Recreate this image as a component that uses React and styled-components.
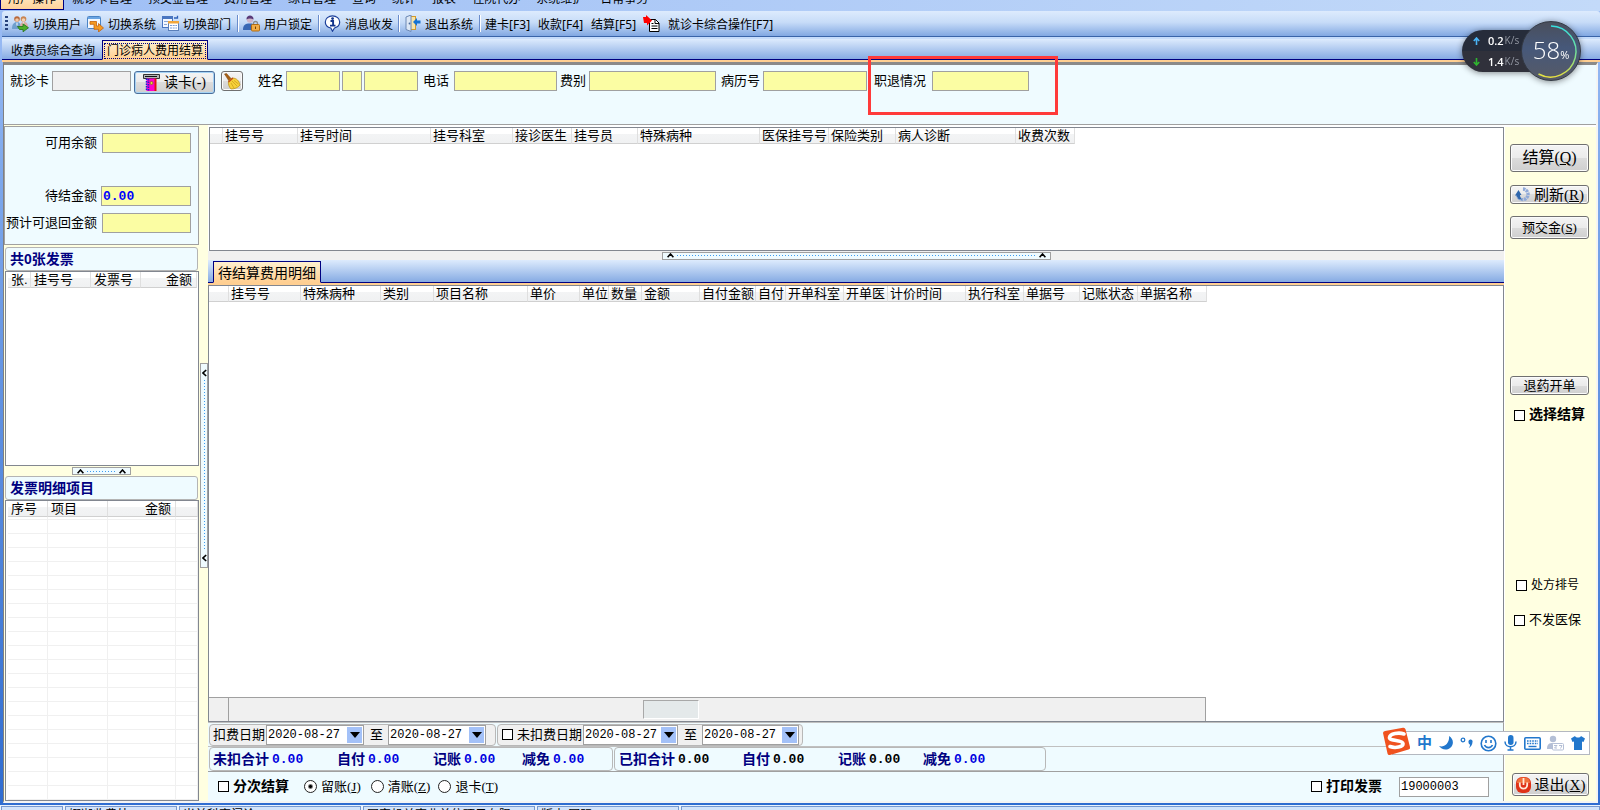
import React from "react";
import styled, { createGlobalStyle, css } from "styled-components";

const Global = createGlobalStyle`
  *, *::before, *::after { box-sizing: border-box; }
  html, body { margin: 0; height: 100%; overflow: hidden; }
  body, button, input, select { font-family: "Liberation Sans", "Noto Sans CJK SC", sans-serif; font-size: 13px; color: #000; }
  body { line-height: 16px; white-space: nowrap; }
`;

const Shell = styled.div`
  position: relative;
  display: flex;
  flex-direction: column;
  height: 100vh;
  overflow: hidden;
  background: linear-gradient(#9ebef5 0, #7fa9ec 20%, #2f6cd0 100%);
`;

/* ---------- menu and toolbar ---------- */
const MenuBar = styled.nav`
  flex: 0 0 11px;
  display: flex;
  align-items: flex-end;
  padding-bottom: 1px;
  overflow: hidden;
  background: linear-gradient(90deg, #9ebef5, #c3daf9);
`;
const MenuItem = styled.button`
  height: 20px;
  padding: 0 7px 2px;
  border: 1px solid ${(p) => (p.$active ? "#000080" : "transparent")};
  background: ${(p) => (p.$active ? "linear-gradient(#fff0d0, #ffd29a)" : "transparent")};
  font-size: 12px;
  line-height: 16px;
`;
const ToolBar = styled.div`
  flex: 0 0 26px;
  display: flex;
  align-items: center;
  margin-left: 2px;
  padding-left: 3px;
  border-bottom: 1px solid #3a64a8;
  border-radius: 3px 3px 0 0;
  background: linear-gradient(#ddebfd, #c7dcf8 45%, #82a8e2);
`;
const Grip = styled.span`
  width: 3px;
  height: 16px;
  margin-right: 4px;
  background: repeating-linear-gradient(#27417a 0 2px, transparent 2px 4px);
`;
const ToolButton = styled.button`
  display: flex;
  align-items: center;
  gap: ${(p) => p.$gap || 4}px;
  height: 22px;
  margin-right: ${(p) => p.$after || 6}px;
  padding: 0;
  border: 0;
  background: none;
  font-family: "Noto Sans", "Noto Sans CJK SC", sans-serif;
  font-size: 12px;
  svg { flex: none; }
`;
const Divider = styled.span`
  width: 2px;
  height: 17px;
  margin-right: 4px;
  border-left: 1px solid #6a8ccb;
  border-right: 1px solid #fff;
`;

/* ---------- tabs ---------- */
const TabStrip = styled.div`
  flex: 0 0 25px;
  display: flex;
  align-items: flex-end;
  margin-left: ${(p) => (p.$inner ? 0 : 2)}px;
  padding-left: ${(p) => (p.$inner ? 5 : 0)}px;
  border-top: ${(p) => (p.$inner ? "0" : "2px solid #c6dcfb")};
  border-bottom: 2px solid #ffcf92;
  background: linear-gradient(#ddebfd, #82a8e2);
  box-shadow: inset 0 -1px 0 #000080;
`;
const Tab = styled.button`
  display: flex;
  align-items: center;
  height: ${(p) => (p.$large ? 22 : 20)}px;
  padding: ${(p) => (p.$large ? "1px 4px 0" : p.$active ? "2px 1px 0" : "2px 6px 0 8px")};
  border: 1px solid transparent;
  background: none;
  font-size: ${(p) => (p.$large ? 14 : 12)}px;
  line-height: 16px;
  ${(p) => p.$active && css`
    border-color: #000080;
    border-bottom-color: #ffcf92;
    background: linear-gradient(#fff0cf, #ffcf92);
  `}
`;
const Focus = styled.span`
  padding: 0 3px;
  outline: 1px dotted #000080;
  outline-offset: -1px;
`;

/* ---------- generic form parts ---------- */
const Frame = styled.div`
  flex: 1;
  min-height: 0;
  display: flex;
  flex-direction: column;
  margin: 0 2px 0 3px;
  border-style: solid;
  border-width: 3px 2px 2px 1px;
  border-color: #8a8a8a #f4f4f4 #f4f4f4 #808080;
  background: #fff;
`;
const Field = styled.label`
  position: relative;
  display: flex;
  align-items: center;
  gap: ${(p) => p.$gap || 3}px;
  margin-left: ${(p) => p.$before || 0}px;
`;
const Box = styled.input`
  flex: none;
  width: ${(p) => p.$w}px;
  height: 20px;
  padding: 0 1px;
  border: 1px solid #a0a0a0;
  border-radius: 0;
  outline: 0;
  background: ${(p) => p.$bg || "#fbfda3"};
  ${(p) => p.$money && css`
    color: #0000ff;
    font: bold 13px "Liberation Mono", monospace;
  `}
  ${(p) => p.$code && css`
    font: 12px "Liberation Mono", monospace;
  `}
`;
const Button = styled.button`
  display: flex;
  align-items: center;
  justify-content: center;
  gap: 4px;
  width: ${(p) => p.$w || 79}px;
  height: ${(p) => p.$h}px;
  margin-top: ${(p) => p.$top || 0}px;
  margin-left: ${(p) => p.$before || 0}px;
  padding: 0;
  border: 1px solid ${(p) => (p.$default ? "#4a6f9c" : "#707070")};
  border-radius: 3px;
  box-shadow: inset 0 0 0 1px ${(p) => (p.$default ? "#a5d3f5" : "#fbfbfb")};
  background: linear-gradient(#f4f4f4, #ebebeb 50%, #dcdcdc 50%, #cfcfcf);
  font-family: "Liberation Serif", "Noto Sans CJK SC", serif;
  font-size: ${(p) => p.$size || 13}px;
  line-height: 16px;
  svg { flex: none; }
`;
const Check = styled.label`
  display: flex;
  align-items: center;
  gap: ${(p) => p.$gap || 4}px;
  margin-top: ${(p) => p.$top || 0}px;
  margin-left: ${(p) => p.$before || 0}px;
  font-family: "Liberation Serif", "Noto Sans CJK SC", serif;
  font-size: ${(p) => p.$size || 13}px;
  font-weight: ${(p) => (p.$bold ? 700 : 400)};
`;
const Tick = styled.input.attrs({ type: "checkbox" })`
  appearance: none;
  flex: none;
  width: 11px;
  height: 11px;
  margin: 0;
  border: 1px solid #000;
  background: #fff;
`;
const Radio = styled.input.attrs({ type: "radio" })`
  appearance: none;
  flex: none;
  width: 13px;
  height: 13px;
  margin: 0;
  border: 1px solid #222;
  border-radius: 50%;
  background: #fff;
  &:checked { background: radial-gradient(circle, #000 0 1px, #fff 3px); }
`;

/* ---------- page areas ---------- */
const Patient = styled.form`
  flex: 0 0 60px;
  display: flex;
  align-items: flex-start;
  padding: 6px 0 0 6px;
  border-bottom: 1px solid #a0a0a0;
  background: #effbff;
`;
const Pair = styled.span`
  display: flex;
  gap: 2px;
`;
const Highlight = styled.span`
  position: absolute;
  inset: -15px -29px -24px -6px;
  border: 3px solid #ff3a3a;
  pointer-events: none;
`;
const Body = styled.div`
  flex: 1;
  min-height: 0;
  display: grid;
  grid-template-columns: 195px 9px minmax(0, 1fr) 92px;
`;
const Side = styled.aside`
  display: flex;
  flex-direction: column;
  min-height: 0;
  background: #ffffe1;
`;
const Balance = styled.div`
  flex: 0 0 119px;
  display: flex;
  flex-direction: column;
  align-items: flex-end;
  margin: 1px 0 2px;
  padding: 6px 7px 0 0;
  border: 1px solid #a0a0a0;
  background: #effbff;
`;
const Gap = styled.span`
  flex: none;
  height: ${(p) => p.$h}px;
`;
const GroupTitle = styled.h2`
  flex: 0 0 23px;
  margin: 0 1px 0 1px;
  padding-left: 4px;
  border: 1px solid #b4b4b4;
  border-radius: 3px;
  background: #effbff;
  color: #000080;
  font-size: 14px;
  line-height: 22px;
`;
const GridBox = styled.div`
  flex: ${(p) => (p.$h ? `0 0 ${p.$h}px` : "1 1 0")};
  min-height: 0;
  display: flex;
  flex-direction: column;
  overflow: hidden;
  margin-left: ${(p) => (p.$indent ? 1 : 0)}px;
  padding-left: ${(p) => (p.$pad ? 2 : 0)}px;
  border: 1px solid #828790;
  background: #fff;
`;
const Table = styled.table`
  flex: none;
  table-layout: fixed;
  width: ${(p) => p.$w}px;
  border-collapse: separate;
  border-spacing: 0;
  th {
    height: 16px;
    padding: 0 0 0 ${(p) => p.$inset}px;
    overflow: hidden;
    border-right: 1px solid #dfdfdf;
    border-bottom: 1px solid #d0d0d0;
    background: linear-gradient(#fff, #fff 40%, #f3f4f5 40%, #f0f1f2);
    font-weight: 400;
    line-height: 15px;
    text-align: left;
  }
  th.num { text-align: right; padding-right: 4px; }
  td {
    height: 14px;
    padding: 0;
    border-right: 1px solid #f0f0f0;
    border-bottom: 1px solid #f0f0f0;
  }
  tr:first-child td { height: 3px; }
`;
const SplitBar = styled.div`
  flex: 0 0 ${(p) => p.$h || 9}px;
  display: flex;
  align-items: center;
  justify-content: center;
  background: ${(p) => p.$bg};
`;
const Handle = styled.button`
  display: flex;
  flex-direction: ${(p) => (p.$vertical ? "column" : "row")};
  align-items: center;
  gap: 3px;
  width: ${(p) => p.$w}px;
  height: ${(p) => p.$h}px;
  padding: ${(p) => (p.$vertical ? "5px 0" : "0 4px")};
  border: 1px solid #a0a0a0;
  background: #effbff;
  svg { flex: none; }
`;
const Dots = styled.span`
  flex: 1;
  align-self: center;
  ${(p) => p.$vertical
    ? css`width: 1px; background: repeating-linear-gradient(#3c9cf0 0 1px, transparent 1px 3px);`
    : css`height: 1px; background: repeating-linear-gradient(90deg, #3c9cf0 0 1px, transparent 1px 3px);`}
`;
const VSplit = styled.div`
  display: flex;
  align-items: center;
  justify-content: flex-end;
  padding-top: 4px;
  background: #ffffe1;
`;
const Main = styled.main`
  display: flex;
  flex-direction: column;
  min-width: 0;
  min-height: 0;
  padding-top: 2px;
  background: #fff;
`;
const GridFoot = styled.div`
  flex: 0 0 24px;
  display: flex;
  width: 997px;
  margin-top: auto;
  border: solid #a0a0a0;
  border-width: 1px 1px 0 0;
  background: #f0f0f0;
`;
const FootMark = styled.span`
  width: 20px;
  border-right: 1px solid #a0a0a0;
`;
const FootCell = styled.span`
  width: 56px;
  height: 19px;
  margin: 2px 0 0 414px;
  border: 1px solid #a8a8a8;
  border-right-color: #fff;
  border-bottom-color: #fff;
  background: #e4e9ea;
`;
const Strip = styled.div`
  flex: 0 0 ${(p) => p.$h}px;
  display: flex;
  align-items: center;
  border-top: 1px solid ${(p) => p.$line || "#c0c0c0"};
  border-right: 1px solid #a0a0a0;
  background: #effbff;
`;
const Group = styled.div`
  display: flex;
  align-items: center;
  width: ${(p) => p.$w}px;
  height: ${(p) => p.$h}px;
  margin-left: 1px;
  padding-left: ${(p) => p.$pad || 4}px;
  border: 1px solid #b8b8b8;
  border-radius: 4px;
  background: ${(p) => p.$bg || "#effbff"};
`;
const DateBox = styled.span`
  display: flex;
  align-items: center;
  width: ${(p) => p.$w || 97}px;
  height: 20px;
  padding-right: 1px;
  border: 1px solid #a0a0a0;
  background: #fff;
`;
const DateSelect = styled.select`
  appearance: none;
  flex: 1;
  min-width: 0;
  height: 18px;
  padding: 1px 0 0 1px;
  border: 0;
  background: none;
  font-family: "Liberation Mono", monospace;
  font-size: 12px;
`;
const Arrow = styled.span`
  display: flex;
  align-items: center;
  justify-content: center;
  width: 15px;
  height: 16px;
  background: #a3c1f8;
`;
const To = styled.span`
  margin: 0 5px 0 6px;
`;
const Sum = styled.span`
  flex: none;
  display: flex;
  align-items: center;
  gap: 3px;
  width: ${(p) => p.$w}px;
  color: #000080;
  font-size: 14px;
  font-weight: 700;
`;
const Amount = styled.output`
  color: ${(p) => (p.$dark ? "#000" : "#0000e0")};
  font: bold 13px "Liberation Mono", monospace;
`;
const PrintArea = styled.div`
  display: flex;
  align-items: center;
  gap: 17px;
  margin-left: auto;
  padding-right: 14px;
`;
const Actions = styled.aside`
  display: flex;
  flex-direction: column;
  align-items: flex-start;
  margin-top: 2px;
  padding: 0 0 5px 5px;
  border-left: 1px solid #fff;
  background: #ffffe1;
`;
const StatusBar = styled.footer`
  flex: 0 0 5px;
  display: flex;
  gap: 2px;
  padding: 1px 0 0 1px;
  overflow: hidden;
  background: #eaf2fd;
`;
const StatusCell = styled.span`
  flex: ${(p) => (p.$w ? `0 0 ${p.$w}px` : "1")};
  height: 20px;
  padding-left: 3px;
  overflow: hidden;
  border: 1px solid #7799d0;
  background: #d3e3fa;
  font-size: 12px;
  line-height: 16px;
`;

/* ---------- floating widgets ---------- */
const ImeBar = styled.div`
  position: absolute;
  right: 10px;
  bottom: 55px;
  display: flex;
  align-items: center;
  justify-content: space-between;
  width: 198px;
  height: 24px;
  padding: 0 4px 0 24px;
  border: 1px solid #b4b8c0;
  background: #fff;
  color: #2277cc;
  font-size: 15px;
  font-weight: 700;
  svg { flex: none; }
`;
const ImeLogo = styled.svg`
  position: absolute;
  left: -11px;
  top: -5px;
`;
const Meter = styled.div`
  position: absolute;
  right: 19px;
  top: 21px;
  display: flex;
  align-items: center;
  filter: drop-shadow(0 1px 3px rgba(0, 0, 0, 0.45));
`;
const Rates = styled.div`
  display: flex;
  flex-direction: column;
  justify-content: space-between;
  width: 79px;
  height: 42px;
  margin-right: -20px;
  padding: 2px 0 2px 11px;
  border-radius: 21px 0 0 21px;
  background: linear-gradient(#262c3a 0 50%, #30313b 50%);
`;
const Rate = styled.span`
  display: flex;
  align-items: center;
  color: #fff;
  font: 600 11px/17px "Open Sans", sans-serif;
  svg { margin-right: 8px; }
  small { color: #9297a2; font-size: 10px; font-weight: 400; margin-left: 1px; }
`;
const Dial = styled.div`
  position: relative;
  display: flex;
  align-items: baseline;
  justify-content: center;
  width: 60px;
  height: 60px;
  border-radius: 50%;
  background: linear-gradient(#4a4f5c, #46587a 45%, #565a66);
  border: 1px solid #333944;
  color: #fff;
  font: 300 24px/56px "Open Sans", sans-serif;
  small { font-size: 11px; font-weight: 400; }
  svg { position: absolute; inset: -1px; }
`;

/* ---------- drawings ---------- */
const Chevron = ({ left }) => (
  <svg width={left ? 5 : 7} height={left ? 8 : 5} viewBox={left ? "0 0 5 8" : "0 0 7 5"}>
    <path d={left ? "M4.2 1L1 4l3.2 3" : "M.6 4.2L3.5 1l2.9 3.2"} fill="none" stroke="#000" strokeWidth="1.6" />
  </svg>
);
const Down = () => (
  <svg width="10" height="6" viewBox="0 0 10 6"><path d="M0 0h10L5 6z" fill="#000" /></svg>
);
const UsersIcon = () => (
  <svg width="17" height="17" viewBox="0 0 17 17">
    <circle cx="5" cy="4" r="2.8" fill="#b9683a" /><circle cx="5" cy="5" r="1.8" fill="#f0c8a8" />
    <circle cx="11.500" cy="4" r="2.800" fill="#c98552" /><circle cx="11.500" cy="5" r="1.800" fill="#f3d2b4" />
    <path d="M0 14c0-5 2-7 5-7s4 2 4 7z" fill="#6f9fce" /><path d="M8 12c0-4 2-5 4-5s4 1 4 5z" fill="#dcaea6" />
    <path d="M5 7.500v3M11.500 7.500v2" stroke="#fff" />
    <path d="M5.500 11.500h5.500V8.800l5.500 4-5.500 4V14.500H7.500z" fill="#4eb02c" stroke="#24701a" strokeWidth=".8" />
  </svg>
);
const SystemIcon = () => (
  <svg width="17" height="17" viewBox="0 0 17 17">
    <rect x=".5" y="1.500" width="13" height="12" rx="1" fill="#f2f8ff" stroke="#4a84c6" />
    <path d="M1 2h12v2H1z" fill="#6aa4e2" />
    <path d="M3 6.500h6.500v4.500h2V8.500l5 4.500-5 4v-2.700H7V9.300H3z" fill="#f59a22" stroke="#c4620a" strokeWidth=".8" />
  </svg>
);
const DeptIcon = () => (
  <svg width="17" height="17" viewBox="0 0 17 17">
    <rect x=".5" y="1.500" width="10" height="11" fill="#f4f8ff" stroke="#4a76c0" /><path d="M1 2h9v2H1z" fill="#4a76c0" />
    <path d="M2 6.500h4M2 9.500h3" stroke="#8aa6d4" />
    <rect x="6.500" y="6.500" width="10" height="9" fill="#fff" stroke="#5a7fba" /><path d="M6 6h11v2.500H6z" fill="#f2a63a" />
    <path d="M8 10.500h7M8 13h7" stroke="#7c9ed6" strokeDasharray="2 .7" />
    <path d="M12 3h3.500V.8" fill="none" stroke="#2f62b8" strokeWidth="1.300" />
  </svg>
);
const LockIcon = () => (
  <svg width="17" height="17" viewBox="0 0 17 17">
    <circle cx="7" cy="4.500" r="3.200" fill="#cdb4c8" /><path d="M3.500 4.500c-.5-5.500 7.500-5.500 7 0-2-1.500-5-1.500-7 0z" fill="#5a3a78" />
    <path d="M0 15c0-5 2-6.500 7-6.500S13 11 13 15z" fill="#3867b4" />
    <path d="M10.500 10V8.500a2 2 0 014 0V10" fill="none" stroke="#8a8a8a" strokeWidth="1.300" />
    <rect x="8.500" y="9.500" width="8" height="6.500" rx="1" fill="#f1ac46" stroke="#b06c12" /><path d="M12.500 11.500v2.500" stroke="#704000" />
  </svg>
);
const InfoIcon = () => (
  <svg width="17" height="17" viewBox="0 0 17 17">
    <path d="M8.500.8c4 0 7.200 2.800 7.200 6.200 0 3-2.200 5.200-5.200 6L8.500 16.200 6.800 13C3.500 12.300 1.300 10 1.300 7 1.300 3.600 4.500.8 8.500.8z" fill="#fff" stroke="#1b3f9a" strokeWidth="1.200" />
    <circle cx="8.600" cy="3.600" r="1.400" fill="#12348c" /><path d="M6.500 6h2.600v4.200M6 10.600h5.500" fill="none" stroke="#12348c" strokeWidth="1.900" />
  </svg>
);
const DoorIcon = () => (
  <svg width="17" height="17" viewBox="0 0 17 17">
    <rect x="4.500" y="1.500" width="7" height="13" fill="#f7e3a8" stroke="#d29a2c" />
    <path d="M2 2l5-2v16.500l-5-2z" fill="#dce7f5" stroke="#6c88b4" /><circle cx="5.500" cy="8.500" r=".9" fill="#4b6a9c" />
    <path d="M9 7l4-4v2.500h3.500v3H13V11z" fill="#1673d2" />
  </svg>
);
const CardIcon = () => (
  <svg width="17" height="17" viewBox="0 0 17 17">
    <path d="M6.500 4.500h6l3.500 3.500v8.500H6.500z" fill="#fff" stroke="#000" /><path d="M12 4.500V8.500h4M8.500 8.500h2M8.500 11h6M8.500 13.500h6" fill="none" stroke="#000" />
    <path d="M0 2h3V0l6 5.500L4 10.500V8H1z" fill="#f00" />
  </svg>
);
const ReaderIcon = () => (
  <svg width="17" height="17" viewBox="0 0 17 17">
    <path d="M.5.5h16v4h-16z" fill="#b5b5b5" stroke="#333" /><path d="M2 2.500h12" stroke="#111" />
    <path d="M3.500 4.500h9V17h-9z" fill="#f0c" /><path d="M3.500 4.500v12.500M5.500 5v12" stroke="#1b22d6" strokeWidth="1.500" strokeDasharray="1.500 1" />
    <path d="M12.500 4.500V17" stroke="#e01010" strokeWidth="2" /><circle cx="8.500" cy="9" r="1.500" fill="#e8d040" stroke="#7a6a10" strokeWidth=".7" />
  </svg>
);
const BroomIcon = () => (
  <svg width="18" height="17" viewBox="0 0 18 17">
    <path d="M1.500 1l2-.5 5 5.500-2.500 2z" fill="#a85f14" stroke="#744008" strokeWidth=".5" />
    <path d="M5.500 8l3.500-3c5 0 7 3 8 7-2 2.500-5 4-9 4-2-2-3-5-2.500-8z" fill="#f7d13a" stroke="#b98c10" strokeWidth=".7" />
    <path d="M9 8l5 5M8 10l3 5M11 7.500l4.500 3.500" stroke="#c79a18" strokeWidth=".7" /><path d="M5.500 9l4.500-4" stroke="#c4481a" strokeWidth="1.300" />
  </svg>
);
const RefreshIcon = () => (
  <svg width="15" height="15" viewBox="0 0 15 15">
    <path d="M8 2a5.300 5.300 0 11-5.500 6" fill="none" stroke="#8fa9d8" strokeWidth="3.400" strokeDasharray="2.400 .7" />
    <path d="M0 8.500L3.500 3l3 5H5c0 2 .7 3 2 4.500C4 13 2 11 1.800 8.500z" fill="#2e66ac" />
  </svg>
);
const PowerIcon = () => (
  <svg width="15" height="16" viewBox="0 0 15 16">
    <rect width="15" height="16" rx="6" fill="#df3218" /><path d="M1 6c0-4 3-5.500 6.500-5.500S14 2 14 6z" fill="#f0713c" />
    <path d="M3.800 5.500v2.500a3.700 3.700 0 007.400 0V5.500M7.500 1v7" fill="none" stroke="#ffe9d8" strokeWidth="1.800" />
  </svg>
);

/* ---------- data ---------- */
const menus = ["用户操作", "就诊卡管理", "预交金管理", "费用管理", "综合管理", "查询", "统计", "报表", "住院代办", "系统维护", "日常事务"];
const registerCols = [["", 13], ["挂号号", 75], ["挂号时间", 133], ["挂号科室", 82], ["接诊医生", 59], ["挂号员", 66], ["特殊病种", 122], ["医保挂号号", 69], ["保险类别", 67], ["病人诊断", 120], ["收费次数", 59]];
const feeCols = [["", 20], ["挂号号", 72], ["特殊病种", 80], ["类别", 53], ["项目名称", 94], ["单价", 52], ["单位", 29], ["数量", 33], ["金额", 58], ["自付金额", 56], ["自付", 30], ["开单科室", 58], ["开单医", 44], ["计价时间", 78], ["执行科室", 58], ["单据号", 56], ["记账状态", 58], ["单据名称", 69]];
const invoiceCols = [["张.", 23], ["挂号号", 60], ["发票号", 50], ["金额", 56, "num"]];
const itemCols = [["序号", 40], ["项目", 60], ["金额", 68, "num"], ["", 22]];
const statuses = [["", 62], ["娜迦收费处", 112], ["当前科室门诊", 182], ["国家机关事业单位项目有限", 172], ["版本 国际", 142], ["", 0]];

const DataGrid = ({ cols, rows = 0, inset = 2 }) => (
  <Table $w={cols.reduce((n, c) => n + c[1], 0)} $inset={inset}>
    <colgroup>{cols.map((c, i) => <col key={i} width={c[1]} />)}</colgroup>
    <thead><tr>{cols.map((c, i) => <th key={i} className={c[2]}>{c[0]}</th>)}</tr></thead>
    {rows > 0 && (
      <tbody>{Array.from({ length: rows }, (_, r) => <tr key={r}>{cols.map((c, i) => <td key={i} />)}</tr>)}</tbody>
    )}
  </Table>
);
const DatePick = ({ w, label }) => (
  <DateBox $w={w}>
    <DateSelect aria-label={label}><option>2020-08-27</option></DateSelect>
    <Arrow><Down /></Arrow>
  </DateBox>
);
const Total = ({ w, name, dark }) => (
  <Sum $w={w}>{name}<Amount $dark={dark}>0.00</Amount></Sum>
);

export default function App() {
  return (
    <>
      <Global />
      <Shell>
        <MenuBar>{menus.map((m, i) => <MenuItem key={m} $active={i === 0}>{m}</MenuItem>)}</MenuBar>
        <ToolBar>
          <Grip />
          <ToolButton><UsersIcon />切换用户</ToolButton>
          <ToolButton><SystemIcon />切换系统</ToolButton>
          <ToolButton><DeptIcon />切换部门</ToolButton>
          <Divider />
          <ToolButton><LockIcon />用户锁定</ToolButton>
          <Divider />
          <ToolButton $after={5}><InfoIcon />消息收发</ToolButton>
          <Divider />
          <ToolButton><DoorIcon />退出系统</ToolButton>
          <Divider />
          <ToolButton $after={8}>建卡[F3]</ToolButton>
          <ToolButton $after={8}>收款[F4]</ToolButton>
          <ToolButton $after={7}>结算[F5]</ToolButton>
          <ToolButton $gap={8}><CardIcon />就诊卡综合操作[F7]</ToolButton>
        </ToolBar>
        <TabStrip>
          <Tab>收费员综合查询</Tab>
          <Tab $active><Focus>门诊病人费用结算</Focus></Tab>
        </TabStrip>

        <Frame>
          <Patient onSubmit={(e) => e.preventDefault()}>
            <Field>就诊卡<Box $w={79} $bg="#f0f0f0" /></Field>
            <Button type="button" $w={81} $h={23} $size={14} $before={3} $default><ReaderIcon />读卡(-)</Button>
            <Button type="button" $w={22} $h={20} $before={6} aria-label="清除"><BroomIcon /></Button>
            <Field $before={15} $gap={2}>姓名
              <Pair><Box $w={54} /><Box $w={20} aria-label="性别" /><Box $w={54} aria-label="年龄" /></Pair>
            </Field>
            <Field $before={5} $gap={5}>电话<Box $w={103} /></Field>
            <Field $before={3}>费别<Box $w={127} /></Field>
            <Field $before={5}>病历号<Box $w={104} /></Field>
            <Field $before={7} $gap={6}>职退情况<Box $w={97} /><Highlight /></Field>
          </Patient>

          <Body>
            <Side>
              <Balance>
                <Field $gap={5}>可用余额<Box $w={89} /></Field>
                <Gap $h={33} />
                <Field $gap={4}>待结金额<Box $w={90} $money defaultValue="0.00" /></Field>
                <Gap $h={7} />
                <Field $gap={5}>预计可退回金额<Box $w={89} /></Field>
              </Balance>
              <GroupTitle>共0张发票</GroupTitle>
              <GridBox $h={195} $indent $pad><DataGrid cols={invoiceCols} inset={3} /></GridBox>
              <SplitBar $h={10} $bg="#ffffe1">
                <Handle $w={59} $h={8} aria-label="折叠发票"><Chevron /><Dots /><Chevron /></Handle>
              </SplitBar>
              <GroupTitle>发票明细项目</GroupTitle>
              <GridBox $indent $pad><DataGrid cols={itemCols} rows={30} inset={3} /></GridBox>
            </Side>
            <VSplit>
              <Handle $vertical $w={8} $h={205} aria-label="折叠左侧"><Chevron left /><Dots $vertical /><Chevron left /></Handle>
            </VSplit>
            <Main>
              <GridBox $h={124} $indent><DataGrid cols={registerCols} /></GridBox>
              <SplitBar $bg="#f0f0f0">
                <Handle $w={389} $h={8} aria-label="折叠挂号列表"><Chevron /><Dots /><Chevron /></Handle>
              </SplitBar>
              <TabStrip $inner><Tab $active $large>待结算费用明细</Tab></TabStrip>
              <GridBox>
                <DataGrid cols={feeCols} />
                <GridFoot><FootMark /><FootCell /></GridFoot>
              </GridBox>
              <Strip $h={24}>
                <Group $w={287} $h={22} $bg="#f0f0f0" $pad={3}>
                  <Field $gap={1}>扣费日期<DatePick label="扣费起始日期" w={98} /></Field>
                  <To>至</To><DatePick label="扣费截止日期" w={98} />
                </Group>
                <Group $w={306} $h={22} $bg="#f0f0f0">
                  <Check><Tick />未扣费日期</Check>
                  <Field $before={1}><DatePick label="未扣费起始日期" w={95} /></Field>
                  <To>至</To><DatePick label="未扣费截止日期" />
                </Group>
              </Strip>
              <Strip $h={25}>
                <Group $w={404} $h={24} $pad={3}>
                  <Total w={124} name="未扣合计" /><Total w={96} name="自付" /><Total w={89} name="记账" /><Total w={70} name="减免" />
                </Group>
                <Group $w={432} $h={24}>
                  <Total w={123} name="已扣合计" dark /><Total w={96} name="自付" dark /><Total w={85} name="记账" dark /><Total w={70} name="减免" />
                </Group>
              </Strip>
              <Strip $h={30} $line="#a0a0a0">
                <Check $bold $size={14} $before={10}><Tick />分次结算</Check>
                <Check $before={15}><Radio name="mode" defaultChecked /><span>留账(<u>J</u>)</span></Check>
                <Check $before={10}><Radio name="mode" /><span>清账(<u>Z</u>)</span></Check>
                <Check $before={8}><Radio name="mode" /><span>退卡(<u>T</u>)</span></Check>
                <PrintArea>
                  <Check $bold $size={14}><Tick />打印发票</Check>
                  <Box $w={90} $bg="#fff" $code defaultValue="19000003" aria-label="发票号码" />
                </PrintArea>
              </Strip>
            </Main>
            <Actions>
              <Button $h={28} $size={16} $top={17}><span>结算(<u>Q</u>)</span></Button>
              <Button $h={19} $size={15} $top={13}><RefreshIcon /><span>刷新(<u>R</u>)</span></Button>
              <Button $h={23} $top={12}><span>预交金(<u>S</u>)</span></Button>
              <Button $h={19} $top={137}>退药开单</Button>
              <Check $bold $size={14} $top={12} $before={4}><Tick />选择结算</Check>
              <Check $size={12} $top={154} $before={6}><Tick />处方排号</Check>
              <Check $top={19} $before={4}><Tick />不发医保</Check>
              <Gap $h={145} />
              <Button $w={77} $h={23} $size={15} $before={2}><PowerIcon /><span>退出(<u>X</u>)</span></Button>
            </Actions>
          </Body>
        </Frame>

        <Gap $h={2} />
        <StatusBar>{statuses.map(([t, w], i) => <StatusCell key={i} $w={w}>{t}</StatusCell>)}</StatusBar>

        <ImeBar>
          <ImeLogo width="29" height="29" viewBox="0 0 29 29">
            <path d="M1 6Q1 4.500 3 4L21 .8q2-.3 2.500 1.500L28 20q.5 2-1.500 2.500L8 28q-2 .5-2.500-1.500z" fill="#f0521f" />
            <path d="M22 7c-5-1.800-14-.5-14.500 3.500-.5 3.500 13 2.500 13.500 6 .5 3.500-8 5-13 3" fill="none" stroke="#fff" strokeWidth="3.600" strokeLinecap="round" />
          </ImeLogo>
          <span>中</span>
          <svg width="15" height="14" viewBox="0 0 15 14"><path d="M10 0c5 3 5 9 1 12-4 3-9 1-11-2 5 2 11-3 10-10z" fill="#2277cc" /></svg>
          <svg width="13" height="12" viewBox="0 0 13 12"><circle cx="3" cy="3" r="1.800" fill="none" stroke="#2277cc" strokeWidth="1.300" /><path d="M8.500 4a2 2 0 114 1c0 3-2 5-3.500 6 .8-1.500 1.200-2.500 1-3.500-1-.2-1.700-1.500-1.500-3.500z" fill="#2277cc" /></svg>
          <svg width="17" height="17" viewBox="0 0 17 17" fill="none" stroke="#2277cc" strokeWidth="1.600"><circle cx="8.500" cy="8.500" r="7.300" /><path d="M6 5v3M11 5v3M4.500 10c1.500 3.500 6.500 3.500 8 0" /></svg>
          <svg width="13" height="16" viewBox="0 0 13 16"><rect x="4" width="5.500" height="10" rx="2.700" fill="#2277cc" /><path d="M1 6.500c0 7 11 7 11 0M6.500 12v3M3.500 15h6" fill="none" stroke="#2277cc" strokeWidth="1.500" /></svg>
          <svg width="17" height="13" viewBox="0 0 17 13"><rect x=".8" y=".8" width="15.400" height="11.400" rx="1" fill="none" stroke="#2277cc" strokeWidth="1.600" /><path d="M3 4h11M3 6.500h11" stroke="#2277cc" strokeWidth="1.500" strokeDasharray="1.600 1" /><path d="M4.500 9.500h8" stroke="#2277cc" strokeWidth="1.400" /></svg>
          <svg width="17" height="16" viewBox="0 0 17 16"><circle cx="6" cy="4" r="3.200" fill="#b4bfd6" /><path d="M0 14c0-5 2-6 6-6 3 0 5 1 5 3v3z" fill="#b4bfd6" /><rect x="5.500" y="8.500" width="11" height="6.500" rx="1" fill="#fff" stroke="#b4bfd6" /><path d="M7 10.500h3L7.500 13H10M12 10.500h3L13.500 13.500" fill="none" stroke="#b4bfd6" /></svg>
          <svg width="14" height="14" viewBox="0 0 14 14"><path d="M4 0c1 2 5 2 6 0l4 2.500-1.500 3.500-1.500-.5V14H3V5.500L1.500 6 0 2.500z" fill="#2277cc" /></svg>
        </ImeBar>

        <Meter>
          <Rates>
            <Rate><svg width="7" height="8" viewBox="0 0 7 8"><path d="M3.500 8V1.500M.8 4l2.700-3 2.700 3" fill="none" stroke="#4ab4f5" strokeWidth="1.600" /></svg>0.2<small>K/s</small></Rate>
            <Rate><svg width="7" height="8" viewBox="0 0 7 8"><path d="M3.500 0v6.500M.8 4l2.700 3 2.700-3" fill="none" stroke="#2fb52f" strokeWidth="1.600" /></svg>1.4<small>K/s</small></Rate>
          </Rates>
          <Dial>
            58<small>%</small>
            <svg width="60" height="60" viewBox="0 0 60 60">
              <defs><linearGradient id="arc" x1="0" y1="0" x2="0" y2="1"><stop offset="0" stopColor="#35e0e0" /><stop offset=".6" stopColor="#7fe08c" /><stop offset="1" stopColor="#e8e040" /></linearGradient></defs>
              <path d="M30 5a25.500 25.500 0 11-12.500 48" fill="none" stroke="url(#arc)" strokeWidth="1.500" />
            </svg>
          </Dial>
        </Meter>
      </Shell>
    </>
  );
}
